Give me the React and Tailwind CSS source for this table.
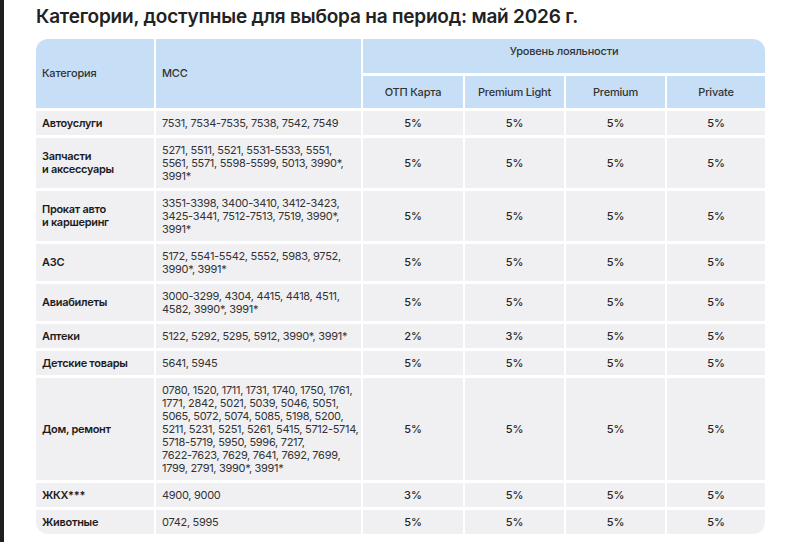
import React from 'react';

const rows = [
  { name: ['Автоуслуги'], mcc: ['7531, 7534-7535, 7538, 7542, 7549'], rates: ['5%', '5%', '5%', '5%'] },
  {
    name: ['Запчасти', 'и аксессуары'],
    mcc: ['5271, 5511, 5521, 5531-5533, 5551,', '5561, 5571, 5598-5599, 5013, 3990*,', '3991*'],
    rates: ['5%', '5%', '5%', '5%'],
  },
  {
    name: ['Прокат авто', 'и каршеринг'],
    mcc: ['3351-3398, 3400-3410, 3412-3423,', '3425-3441, 7512-7513, 7519, 3990*,', '3991*'],
    rates: ['5%', '5%', '5%', '5%'],
  },
  { name: ['АЗС'], mcc: ['5172, 5541-5542, 5552, 5983, 9752,', '3990*, 3991*'], rates: ['5%', '5%', '5%', '5%'] },
  { name: ['Авиабилеты'], mcc: ['3000-3299, 4304, 4415, 4418, 4511,', '4582, 3990*, 3991*'], rates: ['5%', '5%', '5%', '5%'] },
  { name: ['Аптеки'], mcc: ['5122, 5292, 5295, 5912, 3990*, 3991*'], rates: ['2%', '3%', '5%', '5%'] },
  { name: ['Детские товары'], mcc: ['5641, 5945'], rates: ['5%', '5%', '5%', '5%'] },
  {
    name: ['Дом, ремонт'],
    mcc: [
      '0780, 1520, 1711, 1731, 1740, 1750, 1761,',
      '1771, 2842, 5021, 5039, 5046, 5051,',
      '5065, 5072, 5074, 5085, 5198, 5200,',
      '5211, 5231, 5251, 5261, 5415, 5712-5714,',
      '5718-5719, 5950, 5996, 7217,',
      '7622-7623, 7629, 7641, 7692, 7699,',
      '1799, 2791, 3990*, 3991*',
    ],
    rates: ['5%', '5%', '5%', '5%'],
  },
  { name: ['ЖКХ***'], mcc: ['4900, 9000'], rates: ['3%', '5%', '5%', '5%'] },
  { name: ['Животные'], mcc: ['0742, 5995'], rates: ['5%', '5%', '5%', '5%'] },
];

const levels = ['ОТП Карта', 'Premium Light', 'Premium', 'Private'];

const Lines = ({ lines }) =>
  lines.map((line, i) => (
    <div key={i} className="whitespace-nowrap">
      {line}
    </div>
  ));

export default function App() {
  return (
    <div className="flex min-h-[542px] w-[797px] bg-white font-['Inter',sans-serif] text-[#262626]">
      {/* dark edge from the original capture */}
      <div className="w-[4px] shrink-0 bg-[#1e1e1e]" />

      <div className="pl-[32px] pt-[5px]">
        <h1 className="text-[19px] font-semibold leading-[24px] tracking-[-0.2px] text-[#222]">
          Категории, доступные для выбора на период: май 2026 г.
        </h1>

        <div className="mt-[10px] w-[729px] overflow-hidden rounded-[12px]">
          <div className="grid grid-cols-[118px_205px_100px_99px_99px_98px] gap-x-[2px] gap-y-[3px] bg-white text-[11px] leading-[13px] tracking-[-0.3px]">
            {/* header */}
            <div className="row-span-2 flex items-center bg-[#c6dff6] px-[6px] font-medium tracking-[-0.2px] text-[#333]">
              Категория
            </div>
            <div className="row-span-2 flex items-center bg-[#c6dff6] px-[6px] font-medium tracking-[-0.2px] text-[#333]">
              МСС
            </div>
            <div className="col-span-4 h-[34px] bg-[#c6dff6] pt-[6px] text-center font-medium tracking-[-0.2px] text-[#333]">
              Уровень лояльности
            </div>
            {levels.map((l) => (
              <div
                key={l}
                className="flex h-[32px] items-center justify-center bg-[#c6dff6] font-medium tracking-[-0.2px] text-[#333]"
              >
                {l}
              </div>
            ))}

            {/* body */}
            {rows.map((row, ri) => (
              <React.Fragment key={ri}>
                <div className="flex items-center bg-[#f0f0f3] px-[6px] py-[5.5px] font-semibold text-[#1c1c1c]">
                  <div>
                    <Lines lines={row.name} />
                  </div>
                </div>
                <div className="flex items-center bg-[#f0f0f3] px-[6px] py-[5.5px] text-[#333]">
                  <div>
                    <Lines lines={row.mcc} />
                  </div>
                </div>
                {row.rates.map((r, ci) => (
                  <div
                    key={ci}
                    className="flex items-center justify-center bg-[#f0f0f3] py-[5.5px] font-medium tracking-normal text-[#262626]"
                  >
                    {r}
                  </div>
                ))}
              </React.Fragment>
            ))}
          </div>
        </div>
      </div>
    </div>
  );
}
